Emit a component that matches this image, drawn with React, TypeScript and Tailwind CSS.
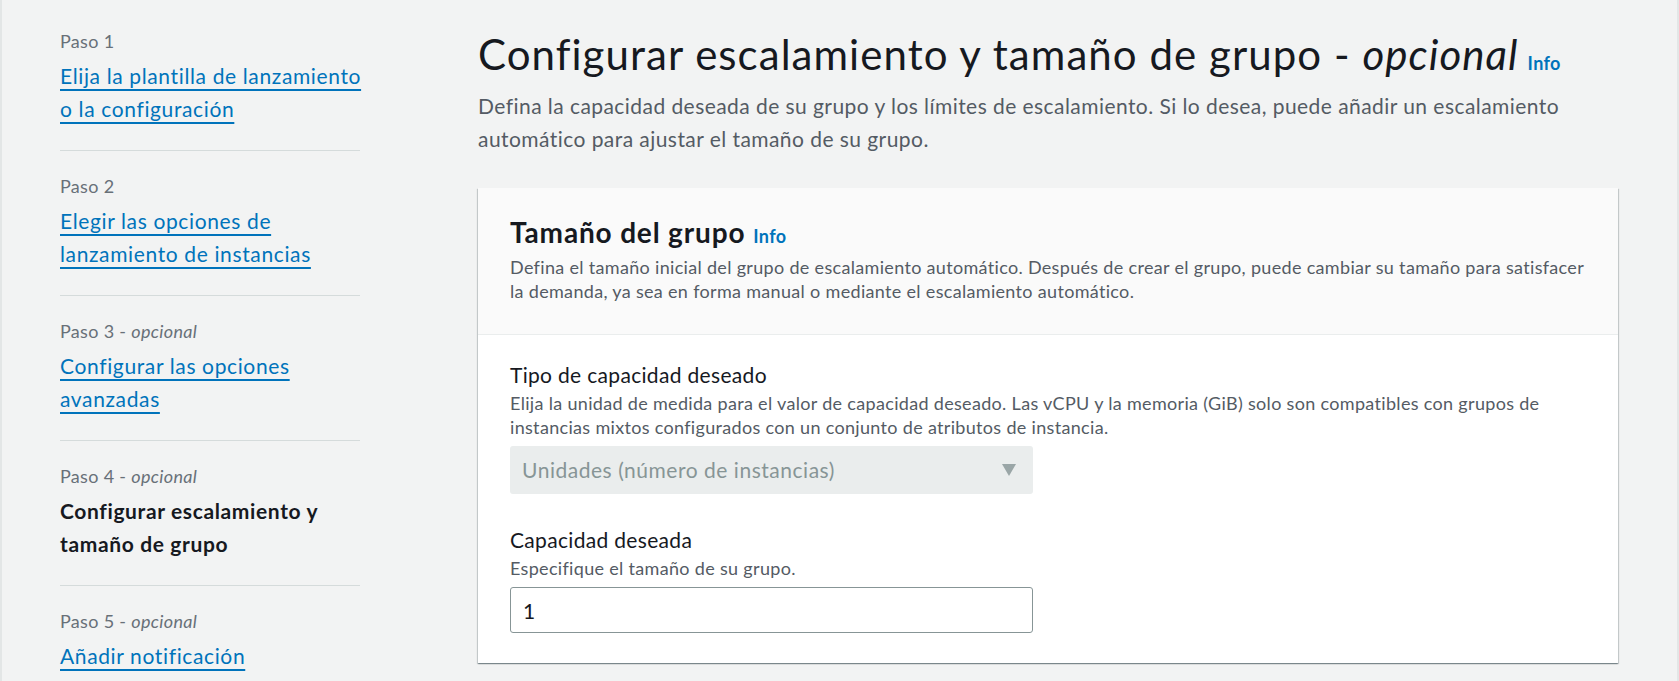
import React from 'react';

type Step = {
  label: string;
  optional: boolean;
  lines: string[];
  current?: boolean;
};

const steps: Step[] = [
  { label: 'Paso 1', optional: false, lines: ['Elija la plantilla de lanzamiento', 'o la configuración'] },
  { label: 'Paso 2', optional: false, lines: ['Elegir las opciones de', 'lanzamiento de instancias'] },
  { label: 'Paso 3', optional: true, lines: ['Configurar las opciones', 'avanzadas'] },
  { label: 'Paso 4', optional: true, lines: ['Configurar escalamiento y', 'tamaño de grupo'], current: true },
  { label: 'Paso 5', optional: true, lines: ['Añadir notificación'] },
];

function Lines({ lines }: { lines: string[] }) {
  return (
    <>
      {lines.map((l, i) => (
        <React.Fragment key={i}>
          {i > 0 && <br />}
          {l}
        </React.Fragment>
      ))}
    </>
  );
}

function StepItem({ step, first }: { step: Step; first: boolean }) {
  return (
    <li className={`pt-[23px] pb-[25px] ${first ? '' : 'border-t border-[#d5dbdb]'}`}>
      <div className="text-[18px] leading-[24px] text-[#687078]">
        {step.label}
        {step.optional && (
          <>
            {' - '}
            <i>opcional</i>
          </>
        )}
      </div>
      <div className="mt-1.5 text-[21px] leading-[33px] tracking-[0.03em] whitespace-nowrap">
        {step.current ? (
          <span className="font-bold text-[#16191f]">
            <Lines lines={step.lines} />
          </span>
        ) : (
          <a
            href="#"
            className="text-[#0073bb] underline decoration-2 underline-offset-[5px] [text-decoration-skip-ink:none]"
          >
            <Lines lines={step.lines} />
          </a>
        )}
      </div>
    </li>
  );
}

function Field({
  label,
  hint,
  children,
}: {
  label: string;
  hint: React.ReactNode;
  children: React.ReactNode;
}) {
  return (
    <div>
      <div className="text-[21px] leading-[33px] text-[#16191f]">{label}</div>
      <div className="text-[18px] leading-[24px] text-[#545b64]">{hint}</div>
      <div className="mt-[7px] w-[523px]">{children}</div>
    </div>
  );
}

export default function App() {
  return (
    <div className="h-[681px] overflow-hidden bg-[#f2f3f3] border-x-2 border-[#e3e6e6] font-['Lato',sans-serif] tracking-[0.02em] flex pl-[58px] pr-[59px]">
      {/* wizard steps */}
      <nav className="w-[300px] shrink-0 pt-[6px]">
        <ul>
          {steps.map((s, i) => (
            <StepItem key={s.label} step={s} first={i === 0} />
          ))}
        </ul>
      </nav>

      <main className="flex-1 ml-[118px] pt-[27px]">
        <h1 className="text-[42px] leading-[54px] tracking-[0.025em] text-[#16191f] whitespace-nowrap">
          Configurar escalamiento y tamaño de grupo - <i>opcional</i>
          <a href="#" className="ml-[9px] text-[18px] leading-none tracking-[0.02em] font-bold text-[#0073bb]">
            Info
          </a>
        </h1>
        <p className="mt-[8px] text-[21px] leading-[33px] tracking-[0.021em] text-[#545b64]">
          Defina la capacidad deseada de su grupo y los límites de escalamiento. Si lo desea, puede añadir un escalamiento
          <br />
          automático para ajustar el tamaño de su grupo.
        </p>

        <section className="mt-[33px] bg-white shadow-[0_1px_1px_0_rgba(0,28,36,0.3),1px_1px_1px_0_rgba(0,28,36,0.15),-1px_1px_1px_0_rgba(0,28,36,0.15)]">
          <header className="bg-[#fafafa] border-b border-[#eaeded] px-[32px] pt-[28px] pb-[31px]">
            <h2 className="text-[28px] leading-[33px] tracking-[0.03em] font-bold text-[#16191f]">
              Tamaño del grupo
              <a href="#" className="ml-[8px] text-[18px] leading-none tracking-[0.02em] font-bold text-[#0073bb]">
                Info
              </a>
            </h2>
            <p className="mt-[6px] text-[18px] leading-[24px] text-[#545b64]">
              Defina el tamaño inicial del grupo de escalamiento automático. Después de crear el grupo, puede cambiar su tamaño para satisfacer
              <br />
              la demanda, ya sea en forma manual o mediante el escalamiento automático.
            </p>
          </header>

          <div className="px-[32px] pt-[23px] pb-[30px] flex flex-col gap-[29px]">
            <Field
              label="Tipo de capacidad deseado"
              hint={
                <>
                  Elija la unidad de medida para el valor de capacidad deseado. Las vCPU y la memoria (GiB) solo son compatibles con grupos de
                  <br />
                  instancias mixtos configurados con un conjunto de atributos de instancia.
                </>
              }
            >
              <div className="h-[48px] rounded-[3px] bg-[#eaeded] flex items-center justify-between pl-[12px] pr-[17px]">
                <span className="text-[21px] tracking-[0.025em] text-[#879596]">Unidades (número de instancias)</span>
                <svg width="14" height="12" viewBox="0 0 14 12" aria-hidden="true">
                  <path d="M0 0h14L7 12z" fill="#9aa6a7" />
                </svg>
              </div>
            </Field>

            <Field label="Capacidad deseada" hint="Especifique el tamaño de su grupo.">
              <input
                readOnly
                value="1"
                className="block w-full h-[46px] rounded-[3px] border border-[#879596] bg-white px-[12px] text-[21px] text-[#16191f] outline-none font-['Lato',sans-serif]"
              />
            </Field>
          </div>
        </section>
      </main>
    </div>
  );
}
